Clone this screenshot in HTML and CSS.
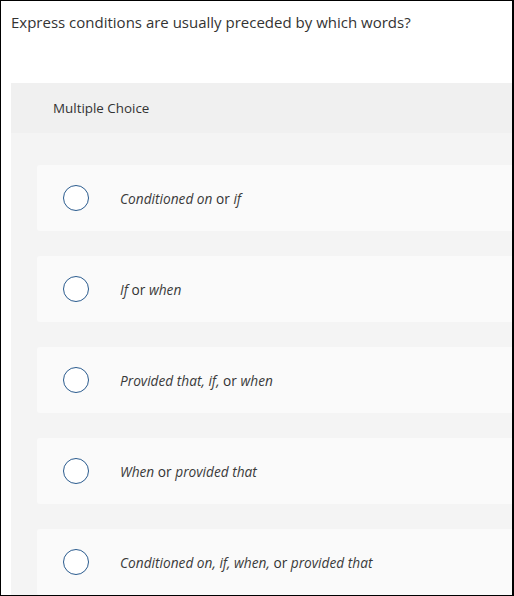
FILE: index.html
```html
<!DOCTYPE html>
<html lang="en">
<head>
    <meta charset="UTF-8">
    <title>Question</title>
    <link rel="stylesheet" href="styles.css">
</head>
<body>
    <div class="page">
        <div class="prompt">Express conditions are usually preceded by which words?</div>
        <div class="question">
            <div class="qtype">Multiple Choice</div>
            <div class="choices">
                <div class="choice">
                    <span class="radio"></span>
                    <span class="label"><i>Conditioned on</i> or <i>if</i></span>
                </div>
                <div class="choice">
                    <span class="radio"></span>
                    <span class="label"><i>If</i> or <i>when</i></span>
                </div>
                <div class="choice">
                    <span class="radio"></span>
                    <span class="label"><i>Provided that, if,</i> or <i>when</i></span>
                </div>
                <div class="choice">
                    <span class="radio"></span>
                    <span class="label"><i>When</i> or <i>provided that</i></span>
                </div>
                <div class="choice">
                    <span class="radio"></span>
                    <span class="label"><i>Conditioned on, if, when,</i> or <i>provided that</i></span>
                </div>
            </div>
        </div>
    </div>
</body>
</html>
```

FILE: styles.css
```css
html, body {
    margin: 0;
    padding: 0;
}

body {
    font-family: "Open Sans", Lato, sans-serif;
    color: #333;
    background: #fff;
}

.page {
    height: 596px;
    box-sizing: border-box;
    border: 1px solid #000;
    border-right-width: 2px;
    overflow: hidden;
}

.prompt {
    font-size: 15px;
    padding: 11px 10px 0;
    height: 71px;
}

.question {
    margin-left: 10px;
    background: #f4f4f4;
}

.qtype {
    background: #f0f0f0;
    height: 50px;
    line-height: 50px;
    padding-left: 42px;
    font-size: 13.4px;
}

.choices {
    display: flex;
    flex-direction: column;
    gap: 25px;
    padding: 32px 0 0 26px;
}

.choice {
    background: #fafafa;
    height: 66px;
    border-radius: 3px 0 0 3px;
    display: flex;
    align-items: center;
}

.radio {
    width: 24px;
    height: 24px;
    border: 1.6px solid #2a5b8e;
    border-radius: 50%;
    background: #fff;
    margin-left: 26px;
}

.label {
    margin-left: 31px;
    font-size: 13.7px;
    color: #333;
}

.label i {
    color: #3a3a3a;
}
```
